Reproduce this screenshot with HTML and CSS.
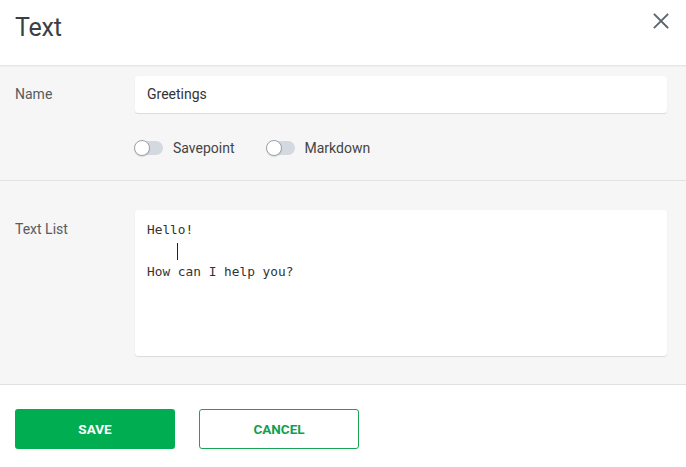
FILE: index.html
```html
<!DOCTYPE html>
<html>
<head>
<meta charset="utf-8">
<link rel="stylesheet" href="styles.css">
</head>
<body>
<div class="dialog">
  <header class="head">
    <h1 class="title">Text</h1>
    <button class="close" aria-label="Close">
      <svg width="16" height="16" viewBox="0 0 16 16"><path d="M1.5 1.5 L14.5 14.5 M14.5 1.5 L1.5 14.5" stroke="#5a6570" stroke-width="1.8" fill="none" stroke-linecap="square"/></svg>
    </button>
  </header>
  <section class="sec sec1">
    <div class="row">
      <div class="label">Name</div>
      <div class="field">
        <div class="input">Greetings</div>
        <div class="toggles">
          <label class="tg"><span class="track"><span class="knob"></span></span><span class="tgl">Savepoint</span></label>
          <label class="tg"><span class="track"><span class="knob"></span></span><span class="tgl">Markdown</span></label>
        </div>
      </div>
    </div>
  </section>
  <section class="sec sec2">
    <div class="row">
      <div class="label label2">Text List</div>
      <div class="field">
        <div class="textarea"><div class="ln">Hello!</div><div class="ln">    <span class="caret"></span></div><div class="ln">How can I help you?</div></div>
      </div>
    </div>
  </section>
  <footer class="foot">
    <button class="btn save">SAVE</button>
    <button class="btn cancel">CANCEL</button>
  </footer>
</div>
</body>
</html>
```
FILE: styles.css
```css
* { box-sizing: border-box; }
html, body { margin: 0; padding: 0; background: #fff; }
body { font-family: Roboto, "Liberation Sans", sans-serif; color: #333; width: 686px; height: 467px; overflow: hidden; }
.dialog { width: 686px; }
.head { height: 66px; display: flex; align-items: flex-start; justify-content: space-between; border-bottom: 1px solid #e6e6e6; }
.title { margin: 0; padding: 13px 0 0 15px; font-size: 25px; font-weight: 400; color: #3a3f45; line-height: 30px; letter-spacing: -0.2px; }
.close { border: 0; background: none; padding: 0; margin: 13px 17px 0 0; width: 16px; height: 16px; display: block; }
.close svg { display: block; }
.sec { background: #f6f6f6; border-bottom: 1px solid #e2e2e2; }
.sec1 { padding: 9px 19px 0 15px; height: 115px; border-top: 1px solid #efefef; }
.sec2 { padding: 29px 19px 0 15px; height: 204px; }
.row { display: flex; }
.label { width: 120px; font-size: 14px; color: #555b61; line-height: 37px; }
.label2 { line-height: 38px; }
.field { flex: 1; }
.input { height: 37px; background: #fff; border-radius: 3px; box-shadow: 0 1px 1px rgba(0,0,0,0.10), 0 0 1px rgba(0,0,0,0.06); padding: 0 12px; font-size: 14px; line-height: 37px; color: #333; }
.toggles { display: flex; gap: 32px; margin-top: 27px; }
.tg { display: flex; align-items: center; gap: 10px; font-size: 14px; color: #444; }
.track { width: 28px; height: 14px; background: #d3d9df; border-radius: 7px; position: relative; display: block; }
.knob { position: absolute; left: -1px; top: -1px; width: 16px; height: 16px; border-radius: 50%; background: #fff; border: 1px solid #9aa0a6; box-shadow: 0 1px 1px rgba(0,0,0,0.1); }
.tgl { line-height: 16px; }
.textarea { height: 146px; background: #fff; border-radius: 3px; box-shadow: 0 1px 1px rgba(0,0,0,0.10), 0 0 1px rgba(0,0,0,0.06); padding: 9px 12px; font-family: "DejaVu Sans Mono", "Liberation Mono", monospace; font-size: 12.8px; color: #333; white-space: pre; }
.ln { height: 21px; line-height: 21px; }
.caret { display: inline-block; width: 1px; height: 17px; background: #222; vertical-align: middle; margin-left: -1px; }
.foot { display: flex; gap: 24px; padding: 24px 15px 0; }
.btn { width: 160px; height: 40px; border-radius: 3px; font-family: Roboto, "Liberation Sans", sans-serif; font-weight: 700; font-size: 13.5px; letter-spacing: 0; line-height: 37px; padding: 0; cursor: pointer; }
.save { background: #00ad50; color: #fff; border: 0; }
.cancel { background: #fff; color: #12a04e; border: 1px solid #18a553; }
```
